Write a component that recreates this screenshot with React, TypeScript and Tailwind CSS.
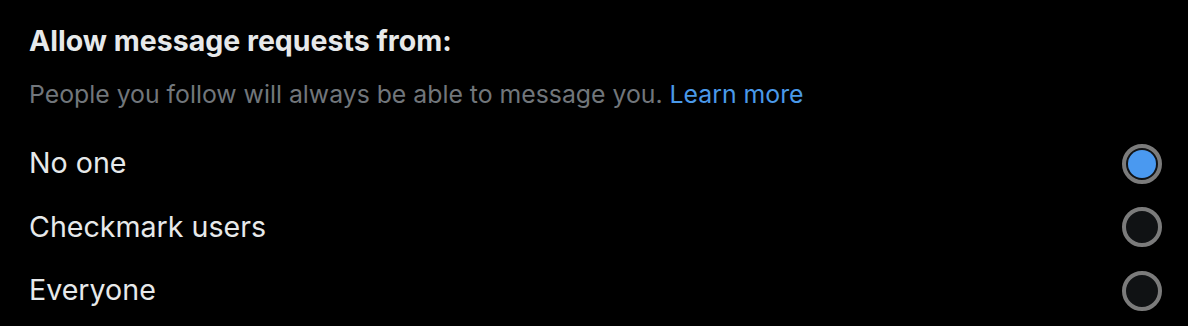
const options = ['No one', 'Checkmark users', 'Everyone']

function Radio({ checked }: { checked: boolean }) {
  return (
    <div className="w-[40px] h-[40px] rounded-full border-[4px] border-[#7b7b7b] bg-[#101214] flex items-center justify-center">
      {checked && <div className="w-[28px] h-[28px] rounded-full bg-[#4a99f0]" />}
    </div>
  )
}

export default function App() {
  return (
    <div className="w-[1188px] h-[326px] bg-black text-white pl-[29px] pr-[26px] pt-[24px]" style={{ fontFamily: 'Inter, "Noto Sans", sans-serif' }}>
      <h2 className="text-[28.5px] font-bold leading-[34px] text-[#e7e9ea]">Allow message requests from:</h2>
      <p className="mt-[20px] text-[24.8px] leading-[32px] text-[#71767b]">
        People you follow will always be able to message you.{' '}
        <span className="text-[#4a99e9]">Learn more</span>
      </p>
      <div className="mt-[22px] flex flex-col">
        {options.map((o, i) => (
          <div key={o} className="flex items-center justify-between h-[63.5px]">
            <span className="text-[28.6px] text-[#e7e9ea]">{o}</span>
            <Radio checked={i === 0} />
          </div>
        ))}
      </div>
    </div>
  )
}
